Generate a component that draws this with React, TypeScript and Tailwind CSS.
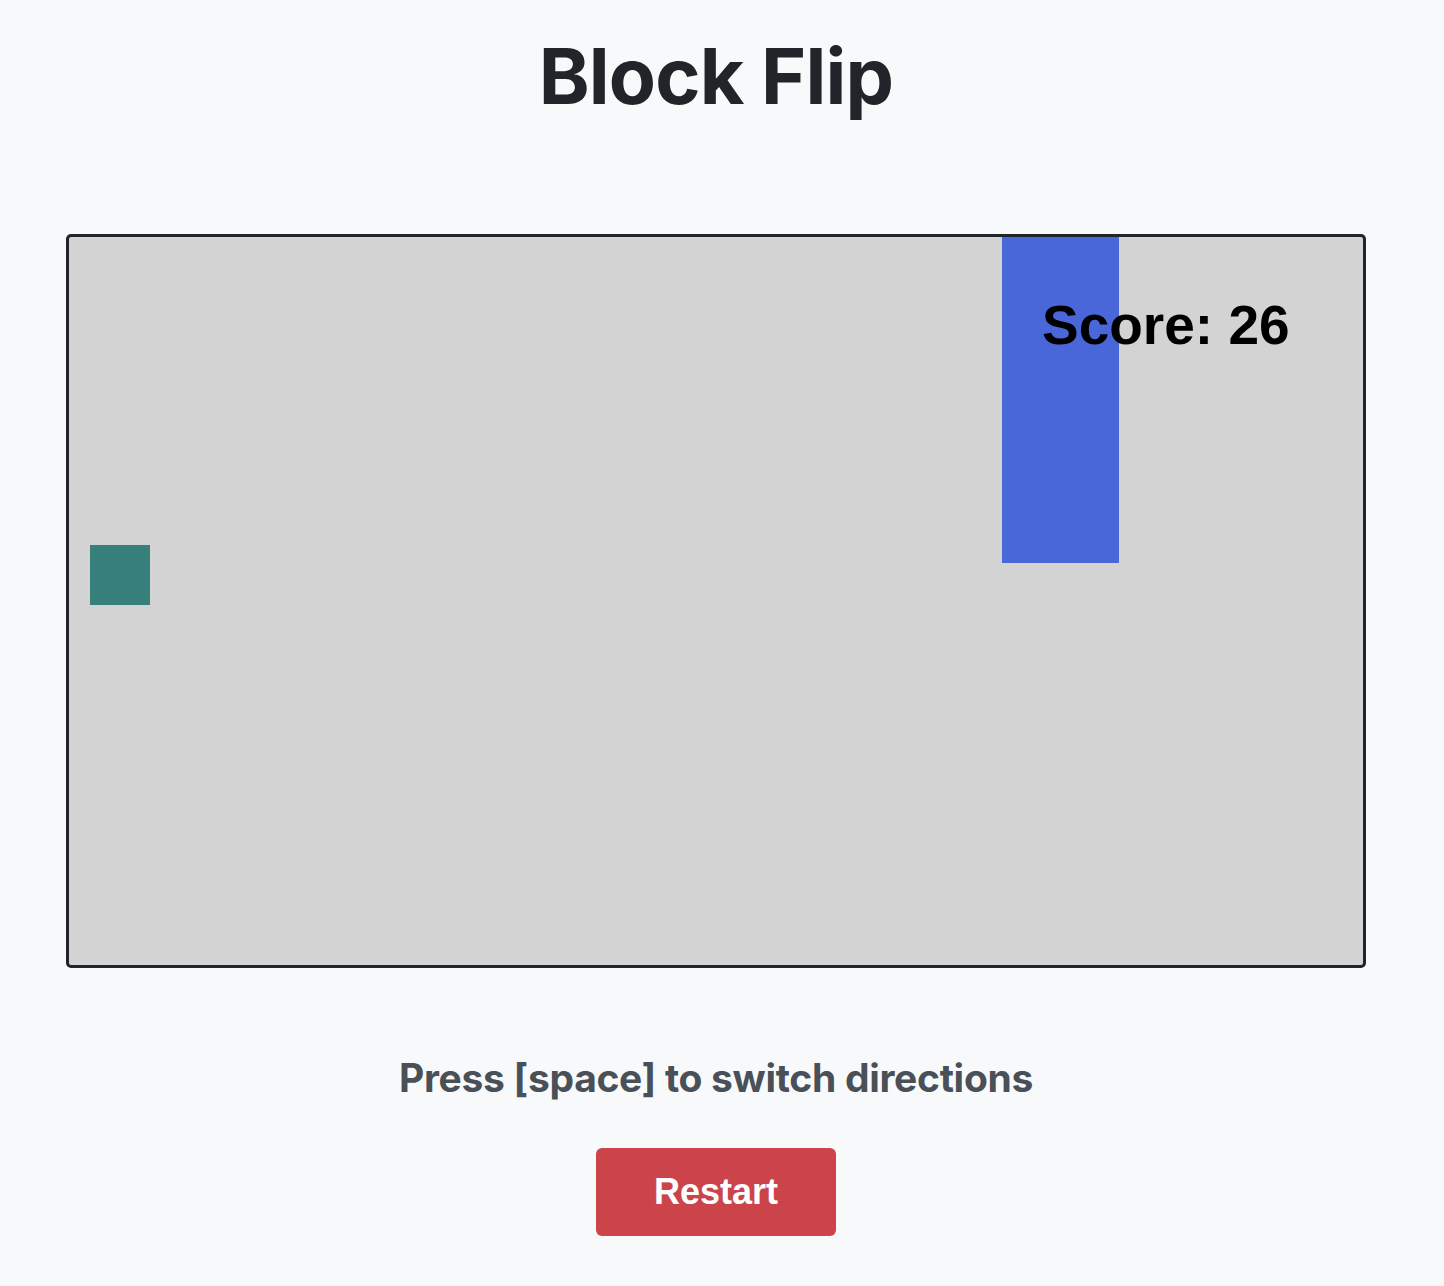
export default function App() {
  return (
    <div className="min-h-[1286px] w-full bg-[#f8f9fa] flex flex-col items-center pr-[12px]" style={{ fontFamily: "Inter, 'Noto Sans', sans-serif" }}>
      <h1 className="mt-[30px] text-[77px] leading-[92px] font-bold text-[#212529] tracking-[-0.8px]">Block Flip</h1>
      <div className="mt-[112px] w-[1300px] h-[734px] border-[3px] border-[#212529] rounded-[5px] bg-[#d3d3d3] relative overflow-hidden">
        <div className="absolute left-[933px] top-0 w-[117px] h-[326px] bg-[#4a67da]" />
        <div className="absolute left-[21px] top-[308px] w-[60px] h-[60px] bg-[#367f7a]" />
        <div className="absolute left-[973px] top-[53px] text-[55px] leading-[70px] font-bold text-black" style={{ fontFamily: "'Liberation Sans', Arial, sans-serif" }}>Score: 26</div>
      </div>
      <p className="mt-[83px] text-[39px] leading-[54px] font-bold text-[#495057] tracking-[-0.3px]">Press [space] to switch directions</p>
      <button className="mt-[43px] w-[240px] h-[88px] rounded-[6px] bg-[#cb444a] text-white text-[36px] font-bold" style={{ fontFamily: "'Liberation Sans', Arial, sans-serif" }}>Restart</button>
    </div>
  );
}
